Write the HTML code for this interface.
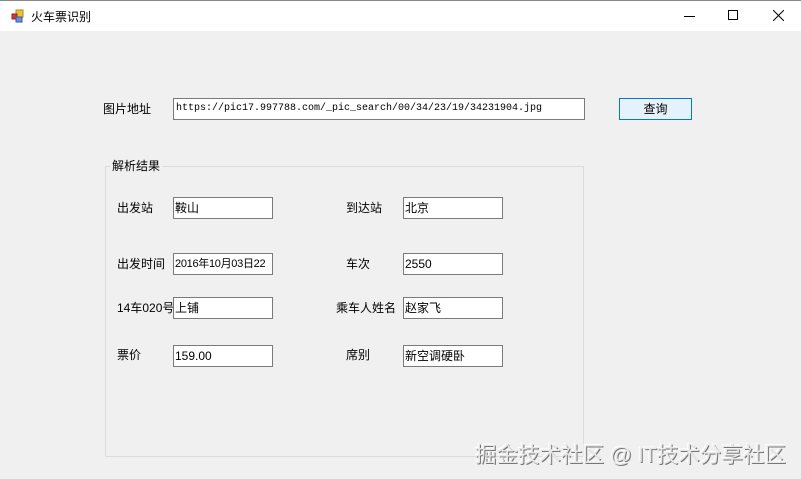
<!DOCTYPE html>
<html><head><meta charset="utf-8"><style>
*{margin:0;padding:0;box-sizing:border-box}
body{width:801px;height:479px;overflow:hidden;background:#f0f0f0;font-family:"Liberation Sans","Noto Sans CJK SC",sans-serif;font-size:12px;color:#000;position:relative}
.a{position:absolute;white-space:nowrap}
.tb{position:absolute;background:#fff;border:1px solid #7a7a7a;height:22px;width:100px;padding:2px 1px;font-size:12px;line-height:16px;overflow:hidden;white-space:nowrap}
.lb{position:absolute;font-size:12px;line-height:16px;white-space:nowrap}
</style></head><body>
<div class="a" style="left:0;top:0;width:801px;height:31px;background:#fff;border-top:1px solid #888"></div>
<svg class="a" style="left:11px;top:9px" width="14" height="14"><rect x="5" y="1" width="7" height="7" fill="#e8c23a" stroke="#b08a10"/><rect x="1" y="5" width="5" height="5" fill="#d33" stroke="#922"/><rect x="5" y="8" width="6" height="5" fill="#6a8ee0" stroke="#3559a8"/></svg>
<div class="a" style="left:31px;top:8px;font-size:12px">火车票识别</div>
<div class="a" style="left:684px;top:16px;width:11px;height:1px;background:#000"></div>
<div class="a" style="left:728px;top:10px;width:10px;height:10px;border:1px solid #000"></div>
<svg class="a" style="left:773px;top:10px" width="11" height="11"><path d="M0 0L11 11M11 0L0 11" stroke="#000" stroke-width="1"/></svg>

<div class="lb" style="left:103px;top:101px">图片地址</div>
<div class="tb" style="left:173px;top:98px;width:412px;font-family:'Liberation Mono',monospace;font-size:10px;padding-left:2px">https://pic17.997788.com/_pic_search/00/34/23/19/34231904.jpg</div>
<div class="a" style="left:619px;top:98px;width:73px;height:22px;background:#e5f1fb;border:1px solid #0078d7;text-align:center;line-height:20px">查询</div>

<div class="a" style="left:105px;top:166px;width:479px;height:291px;border:1px solid #dcdcdc"></div>
<div class="lb" style="left:110px;top:158px;background:#f0f0f0;padding:0 2px">解析结果</div>

<div class="lb" style="left:117px;top:200px">出发站</div>
<div class="tb" style="left:173px;top:197px">鞍山</div>
<div class="lb" style="left:346px;top:200px">到达站</div>
<div class="tb" style="left:403px;top:197px">北京</div>

<div class="lb" style="left:117px;top:256px">出发时间</div>
<div class="tb" style="left:173px;top:253px;font-size:11px;letter-spacing:-0.3px">2016年10月03日22</div>
<div class="lb" style="left:346px;top:256px">车次</div>
<div class="tb" style="left:403px;top:253px">2550</div>

<div class="lb" style="left:117px;top:300px">14车020号</div>
<div class="tb" style="left:173px;top:297px">上铺</div>
<div class="lb" style="left:336px;top:300px">乘车人姓名</div>
<div class="tb" style="left:403px;top:297px">赵家飞</div>

<div class="lb" style="left:117px;top:347px">票价</div>
<div class="tb" style="left:173px;top:345px">159.00</div>
<div class="lb" style="left:346px;top:347px">席别</div>
<div class="tb" style="left:403px;top:345px">新空调硬卧</div>

<div class="a" style="left:475px;top:438px;font-size:21.5px;color:#e8e8e8;text-shadow:1px 1px 0 #777,-1px -1px 0 #fff">掘金技术社区 @ IT技术分享社区</div>
</body></html>
